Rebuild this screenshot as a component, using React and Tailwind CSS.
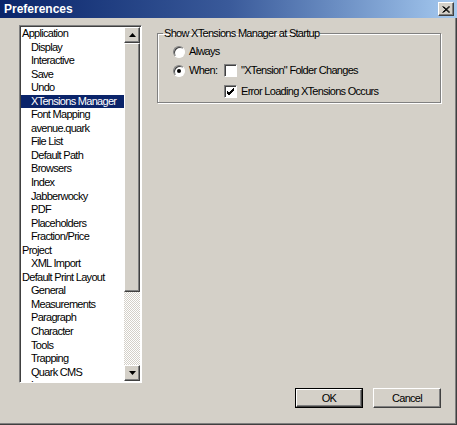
import React from 'react';

const items = [
  ['Application', 0],
  ['Display', 1],
  ['Interactive', 1],
  ['Save', 1],
  ['Undo', 1],
  ['XTensions Manager', 1],
  ['Font Mapping', 1],
  ['avenue.quark', 1],
  ['File List', 1],
  ['Default Path', 1],
  ['Browsers', 1],
  ['Index', 1],
  ['Jabberwocky', 1],
  ['PDF', 1],
  ['Placeholders', 1],
  ['Fraction/Price', 1],
  ['Project', 0],
  ['XML Import', 1],
  ['Default Print Layout', 0],
  ['General', 1],
  ['Measurements', 1],
  ['Paragraph', 1],
  ['Character', 1],
  ['Tools', 1],
  ['Trapping', 1],
  ['Quark CMS', 1],
  ['Layers', 1],
];

const raised =
  'border border-t-white border-l-white border-r-[#404040] border-b-[#404040] shadow-[inset_-1px_-1px_#808080]';

const Radio = ({ checked }) => (
  <div className="w-[12px] h-[12px] rounded-full bg-white border border-t-[#808080] border-l-[#808080] border-r-white border-b-white shadow-[inset_1px_1px_#404040] flex items-center justify-center">
    {checked && <div className="w-[4px] h-[4px] rounded-full bg-black" />}
  </div>
);

const Check = ({ checked }) => (
  <div className="w-[13px] h-[13px] bg-white border border-t-[#808080] border-l-[#808080] border-r-white border-b-white shadow-[inset_1px_1px_#404040] flex items-center justify-center">
    {checked && (
      <svg width="9" height="9" viewBox="0 0 9 9">
        <path d="M1 4 L3 6 L8 1 M1 5 L3 7 L8 2 M1 6 L3 8 L8 3" stroke="#000" strokeWidth="1" fill="none" />
      </svg>
    )}
  </div>
);

const ScrollButton = ({ up }) => (
  <div className={`w-[16px] h-[16px] bg-[#d4d0c8] ${raised} flex items-center justify-center`}>
    <svg width="7" height="4" viewBox="0 0 7 4">
      {up ? <path d="M3.5 0 L7 4 L0 4 Z" fill="#000" /> : <path d="M0 0 L7 0 L3.5 4 Z" fill="#000" />}
    </svg>
  </div>
);

export default function App() {
  return (
    <div
      className="w-[457px] h-[425px] bg-[#d4d0c8] flex flex-col overflow-hidden shadow-[inset_-1px_-1px_#404040,inset_-2px_-2px_#808080] text-black"
      style={{ fontFamily: '"Liberation Sans", Arial, sans-serif' }}
    >
      {/* Title bar */}
      <div className="h-[18px] flex items-center justify-between pl-[4px] pr-[3px] bg-gradient-to-r from-[#0a246a] via-[#3a5a9a] to-[#a6caf0]">
        <span className="text-white font-bold text-[12px] leading-none">Preferences</span>
        <div className={`w-[16px] h-[14px] bg-[#d4d0c8] ${raised} flex items-center justify-center`}>
          <svg width="8" height="7" viewBox="0 0 8 7">
            <path d="M0.5 0.5 L7 6.5 M1.5 0.5 L8 6.5 M7 0.5 L0.5 6.5 M8 0.5 L1.5 6.5" stroke="#000" strokeWidth="1" />
          </svg>
        </div>
      </div>

      <div className="flex pl-[19px] pt-[7px] gap-[15px] text-[11px] tracking-[-0.7px]">
        {/* Category list */}
        <div className="w-[123px] h-[358px] bg-white flex border border-t-[#808080] border-l-[#808080] border-r-white border-b-white shadow-[inset_1px_1px_#404040]">
          <div className="flex-1 overflow-hidden pt-[1px] pl-[1px]">
            {items.map(([label, indent]) => (
              <div
                key={label}
                className={`h-[13.56px] leading-[13.56px] whitespace-nowrap ${
                  indent ? 'pl-[10px]' : 'pl-[1px]'
                } ${label === 'XTensions Manager' ? 'bg-[#0a246a] text-white' : ''}`}
              >
                {label}
              </div>
            ))}
          </div>
          <div className="w-[16px] flex flex-col pt-[1px] pb-[1px] mr-[1px]">
            <ScrollButton up />
            <div className={`h-[249px] bg-[#d4d0c8] ${raised}`} />
            <div className="flex-1 bg-[repeating-conic-gradient(#ffffff_0_25%,#d4d0c8_0_50%)] bg-[length:2px_2px]" />
            <ScrollButton />
          </div>
        </div>

        {/* Right column */}
        <div className="w-[284px] h-[383px] flex flex-col pt-[8px]">
          <fieldset className="h-[76px] border border-[#808080] shadow-[1px_1px_0_#fff,inset_1px_1px_0_#fff] pl-[15px] -mt-[6px]">
            <legend className="-ml-[10px] px-[1px] leading-[12px]">Show XTensions Manager at Startup</legend>
            <div className="flex items-center gap-[4px] h-[19px] mt-[3px]">
              <Radio />
              <span>Always</span>
            </div>
            <div className="flex items-center h-[19px]">
              <Radio checked />
              <span className="ml-[4px] w-[35px]">When:</span>
              <Check />
              <span className="ml-[4px]">"XTension" Folder Changes</span>
            </div>
            <div className="flex items-center h-[21px] pl-[51px] pt-[2px]">
              <Check checked />
              <span className="ml-[4px]">Error Loading XTensions Occurs</span>
            </div>
          </fieldset>

          <div className="mt-auto flex justify-end gap-[10px]">
            <div className="border border-black">
              <button className={`w-[66px] h-[18px] bg-[#d4d0c8] ${raised} leading-none`}>OK</button>
            </div>
            <button className={`w-[68px] h-[20px] bg-[#d4d0c8] ${raised} leading-none`}>Cancel</button>
          </div>
        </div>
      </div>
    </div>
  );
}
